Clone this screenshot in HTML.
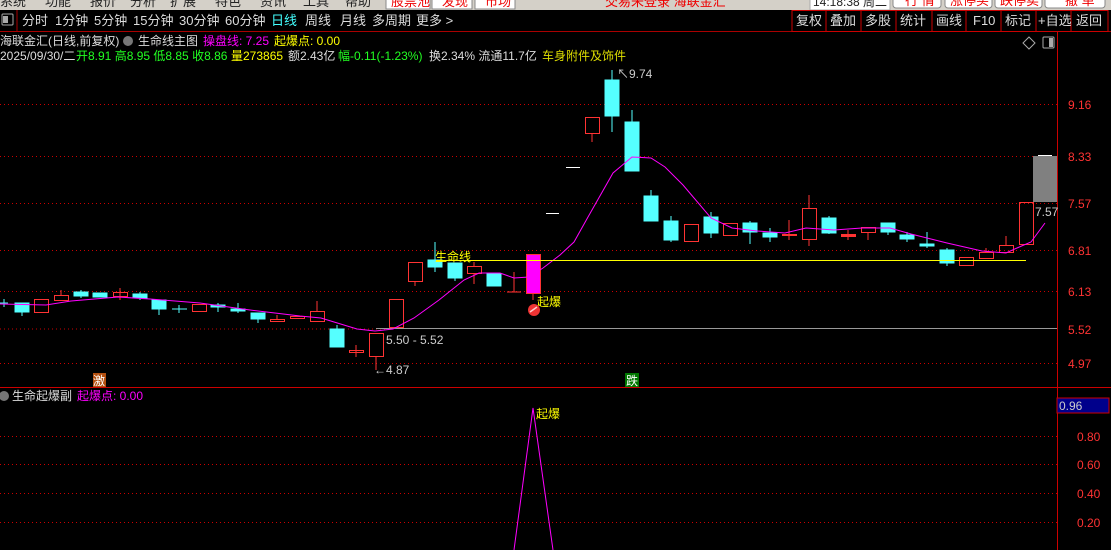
<!DOCTYPE html><html><head><meta charset="utf-8"><style>
body{margin:0;width:1111px;height:550px;background:#000;overflow:hidden;font-family:"Liberation Sans","Noto Sans CJK SC",sans-serif}
svg{display:block}
</style></head><body>
<svg width="1111" height="550" xmlns="http://www.w3.org/2000/svg" font-family="Liberation Sans, Noto Sans CJK SC, sans-serif">
<rect width="1111" height="550" fill="#000"/>
<rect x="0" y="0" width="1111" height="10" fill="#d4d0c8"/>
<g font-size="13" fill="#222"><text x="0" y="6">系统</text><text x="45" y="6">功能</text><text x="90" y="6">报价</text><text x="130" y="6">分析</text><text x="170" y="6">扩展</text><text x="215" y="6">特色</text><text x="260" y="6">资讯</text><text x="303" y="6">工具</text><text x="345" y="6">帮助</text></g>
<g fill="#fff" stroke="#888"><rect x="386" y="-4" width="44" height="13"/><rect x="432" y="-4" width="40" height="13"/><rect x="475" y="-4" width="40" height="13"/><rect x="893" y="-4" width="48" height="12" rx="3"/><rect x="945" y="-4" width="47" height="12" rx="3"/><rect x="995" y="-4" width="47" height="12" rx="3"/><rect x="1045" y="-4" width="60" height="12" rx="3"/></g>
<g font-size="13" fill="#e00"><text x="391" y="6">股票池</text><text x="442" y="6">发现</text><text x="485" y="6">市场</text><text x="605" y="6">交易未登录  海联金汇</text><text x="905" y="5">行  情</text><text x="950" y="5">涨停买</text><text x="1000" y="5">跌停卖</text><text x="1065" y="5">撤  单</text></g>
<rect x="810" y="-1" width="80" height="11" fill="#fff" stroke="#aaa"/><text x="813" y="6" font-size="12" fill="#222">14:18:38 周二</text>
<rect x="2" y="14" width="11" height="11" fill="none" stroke="#aaa" rx="1"/><rect x="3" y="16" width="5" height="7" fill="#aaa"/>
<line x1="17" y1="10" x2="17" y2="31" stroke="#a00"/>
<line x1="0" y1="31.5" x2="1111" y2="31.5" stroke="#a00"/>
<g font-size="13" fill="#ddd"><text x="22" y="25">分时</text><text x="55" y="25">1分钟</text><text x="94" y="25">5分钟</text><text x="133" y="25">15分钟</text><text x="179" y="25">30分钟</text><text x="225" y="25">60分钟</text><text x="271" y="25" fill="#4ff">日线</text><text x="305" y="25">周线</text><text x="340" y="25">月线</text><text x="372" y="25">多周期</text><text x="416" y="25">更多 &gt;</text></g>
<g stroke="#c00" fill="none"><rect x="792" y="10.5" width="316" height="21"/><line x1="826" y1="10" x2="826" y2="31"/><line x1="861" y1="10" x2="861" y2="31"/><line x1="896" y1="10" x2="896" y2="31"/><line x1="932" y1="10" x2="932" y2="31"/><line x1="966" y1="10" x2="966" y2="31"/><line x1="1001" y1="10" x2="1001" y2="31"/><line x1="1036" y1="10" x2="1036" y2="31"/><line x1="1071" y1="10" x2="1071" y2="31"/></g>
<g font-size="13" fill="#ddd"><text x="796" y="25">复权</text><text x="830" y="25">叠加</text><text x="865" y="25">多股</text><text x="900" y="25">统计</text><text x="936" y="25">画线</text><text x="973" y="25">F10</text><text x="1005" y="25">标记</text><text x="1038" y="25">+自选</text><text x="1076" y="25">返回</text></g>
<line x1="1057.5" y1="32" x2="1057.5" y2="550" stroke="#c00"/>
<line x1="0" y1="387.5" x2="1111" y2="387.5" stroke="#c00"/>
<g font-size="12"><text x="0" y="45" fill="#ddd">海联金汇(日线,前复权)</text><circle cx="128" cy="41" r="5" fill="#777"/><text x="138" y="45" fill="#ddd">生命线主图</text><text x="203" y="45" fill="#f0f">操盘线: 7.25</text><text x="274" y="45" fill="#ff0">起爆点: 0.00</text>
<text x="0" y="60" fill="#ddd">2025/09/30/二</text><text x="76" y="60" fill="#2f2">开8.91 高8.95 低8.85 收8.86</text><text x="231" y="60" fill="#ff0">量273865</text><text x="288" y="60" fill="#ddd">额2.43亿</text><text x="338" y="60" fill="#2f2">幅-0.11(-1.23%)</text><text x="429" y="60" fill="#ddd">换2.34% 流通11.7亿</text><text x="542" y="60" fill="#dd0">车身附件及饰件</text></g>
<path d="M1029 37l6 6-6 6-6-6z" fill="none" stroke="#aaa"/><rect x="1043" y="37" width="11" height="11" fill="none" stroke="#aaa" rx="1"/><rect x="1049" y="38" width="4" height="9" fill="#aaa"/>
<g stroke="#c00" stroke-dasharray="1,3"><line x1="0" y1="104.5" x2="1057" y2="104.5"/><line x1="0" y1="156.5" x2="1057" y2="156.5"/><line x1="0" y1="203.5" x2="1057" y2="203.5"/><line x1="0" y1="250.5" x2="1057" y2="250.5"/><line x1="0" y1="291.5" x2="1057" y2="291.5"/><line x1="0" y1="363.5" x2="1057" y2="363.5"/>
<line x1="0" y1="436.5" x2="1057" y2="436.5"/><line x1="0" y1="464.5" x2="1057" y2="464.5"/><line x1="0" y1="493.5" x2="1057" y2="493.5"/><line x1="0" y1="522.5" x2="1057" y2="522.5"/></g>
<line x1="0" y1="329" x2="393" y2="329" stroke="#c00" stroke-dasharray="1,3"/>
<line x1="376" y1="328.5" x2="1057" y2="328.5" stroke="#999"/>
<g font-size="12" fill="#f33"><text x="1068" y="109">9.16</text><text x="1068" y="161">8.33</text><text x="1068" y="208">7.57</text><text x="1068" y="255">6.81</text><text x="1068" y="296">6.13</text><text x="1068" y="334">5.52</text><text x="1068" y="368">4.97</text><text x="1077" y="441">0.80</text><text x="1077" y="469">0.60</text><text x="1077" y="498">0.40</text><text x="1077" y="527">0.20</text></g>
<rect x="1057" y="398" width="52" height="15" fill="#00008b" stroke="#c00"/><text x="1059" y="410" font-size="12" fill="#ccc">0.96</text>
<g stroke-width="1">
<g fill="#5ff" stroke="#5ff">
<line x1="4" y1="299" x2="4" y2="307"/><line x1="0" y1="303" x2="8" y2="303"/>
<rect x="15" y="303" width="14" height="9"/><line x1="22" y1="312" x2="22" y2="316"/>
<rect x="74" y="292" width="14" height="4"/><line x1="81" y1="290" x2="81" y2="298"/>
<rect x="93" y="293" width="14" height="4"/>
<rect x="133" y="294" width="14" height="4"/><line x1="140" y1="292" x2="140" y2="300"/>
<rect x="152" y="300" width="14" height="9"/><line x1="159" y1="309" x2="159" y2="315"/>
<line x1="172" y1="309" x2="187" y2="309"/><line x1="179" y1="305" x2="179" y2="313"/>
<rect x="211" y="305" width="14" height="2"/><line x1="218" y1="303" x2="218" y2="312"/>
<rect x="231" y="309" width="14" height="2"/><line x1="238" y1="303" x2="238" y2="313"/>
<rect x="251" y="313" width="14" height="6"/><line x1="258" y1="319" x2="258" y2="323"/>
<rect x="330" y="329" width="14" height="18"/><line x1="337" y1="325" x2="337" y2="329"/>
<rect x="428" y="260" width="14" height="7"/><line x1="435" y1="242" x2="435" y2="272"/>
<rect x="448" y="263" width="14" height="15"/><line x1="455" y1="278" x2="455" y2="281"/>
<rect x="487" y="274" width="14" height="12"/>
<rect x="605" y="80" width="14" height="36"/><line x1="612" y1="70" x2="612" y2="132"/>
<rect x="625" y="122" width="14" height="49"/><line x1="632" y1="110" x2="632" y2="122"/>
<rect x="644" y="196" width="14" height="25"/><line x1="651" y1="190" x2="651" y2="196"/>
<rect x="664" y="221" width="14" height="19"/><line x1="671" y1="216" x2="671" y2="242"/>
<rect x="704" y="217" width="14" height="16"/><line x1="711" y1="212" x2="711" y2="238"/>
<rect x="743" y="223" width="14" height="9"/><line x1="750" y1="221" x2="750" y2="244"/>
<rect x="763" y="233" width="14" height="4"/><line x1="770" y1="228" x2="770" y2="242"/>
<rect x="822" y="218" width="14" height="15"/><line x1="829" y1="216" x2="829" y2="234"/>
<rect x="881" y="223" width="14" height="9"/><line x1="888" y1="232" x2="888" y2="235"/>
<rect x="900" y="235" width="14" height="4"/><line x1="907" y1="232" x2="907" y2="242"/>
<rect x="920" y="244" width="14" height="2"/><line x1="927" y1="232" x2="927" y2="248"/>
<rect x="940" y="250" width="14" height="13"/><line x1="947" y1="248" x2="947" y2="266"/>
</g>
<g fill="none" stroke="#f33">
<rect x="34.5" y="299.5" width="14" height="13"/>
<rect x="54.5" y="295.5" width="14" height="5"/><line x1="61" y1="290" x2="61" y2="295"/>
<rect x="113.5" y="292.5" width="14" height="4"/><line x1="120" y1="288" x2="120" y2="300"/>
<rect x="192.5" y="304.5" width="14" height="7"/>
<rect x="270.5" y="319.5" width="14" height="2"/><line x1="277" y1="315" x2="277" y2="319"/>
<rect x="290.5" y="316.5" width="14" height="2"/>
<rect x="310.5" y="311.5" width="14" height="10"/><line x1="317" y1="301" x2="317" y2="311"/>
<rect x="349.5" y="350.5" width="14" height="2"/><line x1="356" y1="345" x2="356" y2="357"/>
<rect x="369.5" y="333.5" width="14" height="23"/><line x1="376" y1="357" x2="376" y2="370"/>
<rect x="389.5" y="299.5" width="14" height="28"/>
<rect x="408.5" y="262.5" width="14" height="19"/><line x1="415" y1="282" x2="415" y2="286"/>
<rect x="467.5" y="266.5" width="14" height="7"/><line x1="474" y1="262" x2="474" y2="266"/><line x1="474" y1="274" x2="474" y2="284"/>
<line x1="507" y1="292" x2="521" y2="292"/><line x1="514" y1="272" x2="514" y2="292"/>
<rect x="585.5" y="117.5" width="14" height="16"/><line x1="592" y1="134" x2="592" y2="142"/>
<rect x="684.5" y="224.5" width="14" height="17"/>
<rect x="723.5" y="223.5" width="14" height="12"/>
<rect x="782.5" y="234.5" width="14" height="1"/><line x1="789" y1="220" x2="789" y2="240"/>
<rect x="802.5" y="208.5" width="14" height="31"/><line x1="809" y1="195" x2="809" y2="208"/><line x1="809" y1="240" x2="809" y2="246"/>
<rect x="841.5" y="234.5" width="14" height="2" fill="#f33"/><line x1="848" y1="230" x2="848" y2="240"/>
<rect x="861.5" y="227.5" width="14" height="5"/><line x1="868" y1="232" x2="868" y2="240"/>
<rect x="959.5" y="257.5" width="14" height="8"/>
<rect x="979.5" y="252.5" width="14" height="6"/><line x1="986" y1="248" x2="986" y2="252"/>
<rect x="999.5" y="245.5" width="14" height="7"/><line x1="1006" y1="236" x2="1006" y2="245"/>
<rect x="1019.5" y="202.5" width="14" height="42"/>
</g>
<rect x="526.5" y="254.5" width="14" height="39" fill="#f0f" stroke="#f33"/><line x1="533" y1="294" x2="533" y2="300" stroke="#f33"/>
<line x1="546" y1="213.5" x2="559" y2="213.5" stroke="#fff"/>
<line x1="566" y1="167.5" x2="580" y2="167.5" stroke="#fff"/>
<rect x="1033" y="156" width="24" height="46" fill="#808080"/><line x1="1038" y1="155.5" x2="1052" y2="155.5" stroke="#fff"/>
</g>
<polyline fill="none" stroke="#f0f" stroke-width="1" points="0,304 46,305 71,301 118,297 150,299 200,303 250,310 300,316 321,318 357,329 375,331 393,329 414,318 439,300 464,280 479,273 500,273 514,278 529,277 543,268 560,255 574,242 588,217 613,173 632,157 651,158 665,167 683,185 711,218 732,228 757,231 785,233 806,228 834,230 862,228 890,228 911,234 947,243 982,251 1006,253 1017,248 1031,242 1045,223"/>
<line x1="436" y1="260.5" x2="1026" y2="260.5" stroke="#ff0"/>
<g font-size="12"><text x="435" y="261" fill="#ff0">生命线</text><text x="537" y="306" fill="#ff0">起爆</text>
<text x="386" y="344" fill="#ccc">5.50 - 5.52</text><text x="374" y="374" fill="#ccc">←4.87</text>
<text x="617" y="78" fill="#ccc">↖9.74</text><text x="1035" y="216" fill="#ccc">7.57</text></g>
<circle cx="534" cy="310" r="6" fill="#e33"/><path d="M530 312l7-5" stroke="#fcc" stroke-width="1.5"/>
<rect x="93" y="373" width="13" height="14" fill="#b45010"/><text x="93" y="385" font-size="12" fill="#fff">激</text>
<rect x="625" y="373" width="14" height="14" fill="#007700"/><text x="626" y="385" font-size="12" fill="#fff">跌</text>
<circle cx="4" cy="396" r="5" fill="#777"/><text x="12" y="400" font-size="12" fill="#ddd">生命起爆副</text><text x="77" y="400" font-size="12" fill="#f0f">起爆点: 0.00</text>
<polyline fill="none" stroke="#f0f" points="514,550 533,408 553,550"/>
<text x="536" y="418" font-size="12" fill="#ff0">起爆</text>
</svg>
</body></html>
